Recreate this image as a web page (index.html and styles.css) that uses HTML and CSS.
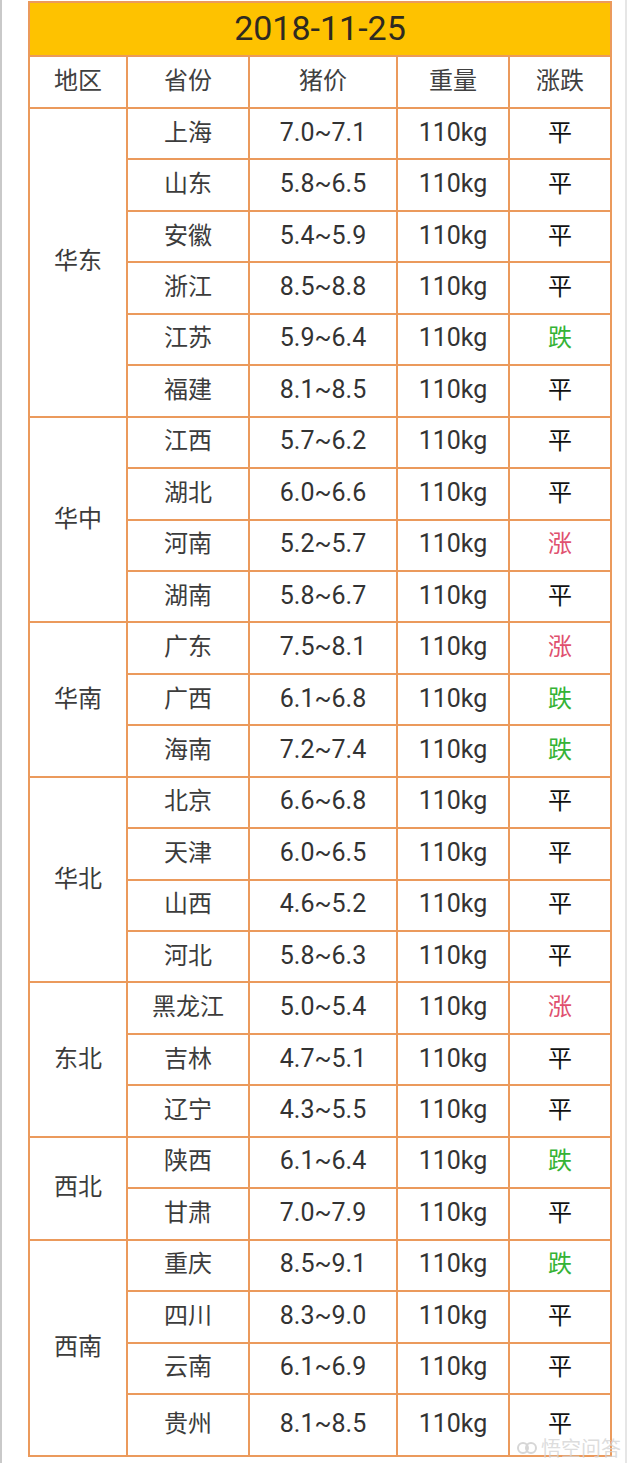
FILE: index.html
```html
<!DOCTYPE html>
<html lang="zh">
<head>
<meta charset="utf-8">
<title>2018-11-25</title>
<link rel="stylesheet" href="styles.css">
</head>
<body>
<div class="page">
<table class="prices">
<colgroup>
<col class="c-area"><col class="c-prov"><col class="c-price"><col class="c-weight"><col class="c-trend">
</colgroup>
<thead>
<tr class="title-row"><th colspan="5" class="title">2018-11-25</th></tr>
<tr class="head-row"><th>地区</th><th>省份</th><th>猪价</th><th>重量</th><th>涨跌</th></tr>
</thead>
<tbody>
<tr><td rowspan="6" class="area">华东</td><td class="prov">上海</td><td class="num">7.0~7.1</td><td class="num">110kg</td><td class="flat">平</td></tr>
<tr><td class="prov">山东</td><td class="num">5.8~6.5</td><td class="num">110kg</td><td class="flat">平</td></tr>
<tr><td class="prov">安徽</td><td class="num">5.4~5.9</td><td class="num">110kg</td><td class="flat">平</td></tr>
<tr><td class="prov">浙江</td><td class="num">8.5~8.8</td><td class="num">110kg</td><td class="flat">平</td></tr>
<tr><td class="prov">江苏</td><td class="num">5.9~6.4</td><td class="num">110kg</td><td class="down">跌</td></tr>
<tr><td class="prov">福建</td><td class="num">8.1~8.5</td><td class="num">110kg</td><td class="flat">平</td></tr>
<tr><td rowspan="4" class="area">华中</td><td class="prov">江西</td><td class="num">5.7~6.2</td><td class="num">110kg</td><td class="flat">平</td></tr>
<tr><td class="prov">湖北</td><td class="num">6.0~6.6</td><td class="num">110kg</td><td class="flat">平</td></tr>
<tr><td class="prov">河南</td><td class="num">5.2~5.7</td><td class="num">110kg</td><td class="up">涨</td></tr>
<tr><td class="prov">湖南</td><td class="num">5.8~6.7</td><td class="num">110kg</td><td class="flat">平</td></tr>
<tr><td rowspan="3" class="area">华南</td><td class="prov">广东</td><td class="num">7.5~8.1</td><td class="num">110kg</td><td class="up">涨</td></tr>
<tr><td class="prov">广西</td><td class="num">6.1~6.8</td><td class="num">110kg</td><td class="down">跌</td></tr>
<tr><td class="prov">海南</td><td class="num">7.2~7.4</td><td class="num">110kg</td><td class="down">跌</td></tr>
<tr><td rowspan="4" class="area">华北</td><td class="prov">北京</td><td class="num">6.6~6.8</td><td class="num">110kg</td><td class="flat">平</td></tr>
<tr><td class="prov">天津</td><td class="num">6.0~6.5</td><td class="num">110kg</td><td class="flat">平</td></tr>
<tr><td class="prov">山西</td><td class="num">4.6~5.2</td><td class="num">110kg</td><td class="flat">平</td></tr>
<tr><td class="prov">河北</td><td class="num">5.8~6.3</td><td class="num">110kg</td><td class="flat">平</td></tr>
<tr><td rowspan="3" class="area">东北</td><td class="prov">黑龙江</td><td class="num">5.0~5.4</td><td class="num">110kg</td><td class="up">涨</td></tr>
<tr><td class="prov">吉林</td><td class="num">4.7~5.1</td><td class="num">110kg</td><td class="flat">平</td></tr>
<tr><td class="prov">辽宁</td><td class="num">4.3~5.5</td><td class="num">110kg</td><td class="flat">平</td></tr>
<tr><td rowspan="2" class="area">西北</td><td class="prov">陕西</td><td class="num">6.1~6.4</td><td class="num">110kg</td><td class="down">跌</td></tr>
<tr><td class="prov">甘肃</td><td class="num">7.0~7.9</td><td class="num">110kg</td><td class="flat">平</td></tr>
<tr><td rowspan="4" class="area">西南</td><td class="prov">重庆</td><td class="num">8.5~9.1</td><td class="num">110kg</td><td class="down">跌</td></tr>
<tr><td class="prov">四川</td><td class="num">8.3~9.0</td><td class="num">110kg</td><td class="flat">平</td></tr>
<tr><td class="prov">云南</td><td class="num">6.1~6.9</td><td class="num">110kg</td><td class="flat">平</td></tr>
<tr class="last-row"><td class="prov">贵州</td><td class="num">8.1~8.5</td><td class="num">110kg</td><td class="flat">平</td></tr>
</tbody>
</table>
<div class="watermark"><svg class="wm-logo" width="22" height="14" viewBox="0 0 22 14"><circle cx="7" cy="7" r="5" fill="none" stroke="#d6d6d6" stroke-width="2"/><circle cx="15" cy="7" r="5" fill="none" stroke="#d6d6d6" stroke-width="2"/></svg><span>悟空问答</span></div>
</div>
</body>
</html>
```
FILE: styles.css
```css
html, body {
  margin: 0;
  padding: 0;
  background: #ffffff;
}
body {
  width: 640px;
  height: 1463px;
  overflow: hidden;
}
.page {
  position: relative;
  box-sizing: border-box;
  width: 627px;
  height: 1463px;
  border-left: 2px solid #c9c9c9;
  border-right: 2px solid #e6e6e6;
  padding-top: 1px;
  padding-left: 26px;
}
.prices {
  border-collapse: collapse;
  table-layout: fixed;
  width: 582px;
  font-family: "Noto Sans CJK SC", "Noto Sans", sans-serif;
  color: #3a3a3a;
}
.c-area { width: 98px; }
.c-prov { width: 122px; }
.c-price { width: 148px; }
.c-weight { width: 112px; }
.c-trend { width: 102px; }
.prices th, .prices td {
  border: 2px solid #eb9a5c;
  padding: 0 0 6px 0;
  text-align: center;
  vertical-align: middle;
  font-weight: 400;
  font-size: 24px;
  line-height: 1;
}
.title-row { height: 54px; }
.prices .title {
  background: #fec200;
  font-family: Roboto, "Noto Sans", sans-serif;
  font-size: 34px;
  color: #2e2a20;
  padding: 0 0 2px 0;
}
.head-row { height: 52px; }
.prices .head-row th { color: #404040; }
.prices tbody tr { height: 51.45px; }
.prices tbody tr.last-row { height: 62px; }
.prices .area { color: #3c3c3c; }
.prices .prov { color: #3c3c3c; }
.prices .num {
  font-family: Roboto, "Noto Sans", sans-serif;
  font-size: 25px;
  color: #333333;
  padding-bottom: 3px;
}
.prices .flat { color: #111111; }
.prices .up { color: #e0506e; }
.prices .down { color: #35b335; }
.watermark {
  position: absolute;
  left: 514px;
  top: 1438px;
  display: flex;
  align-items: center;
  gap: 3px;
  white-space: nowrap;
  font-family: "Noto Sans CJK SC", sans-serif;
  font-size: 20px;
  color: rgba(212, 212, 212, 0.8);
  line-height: 1;
}
```
